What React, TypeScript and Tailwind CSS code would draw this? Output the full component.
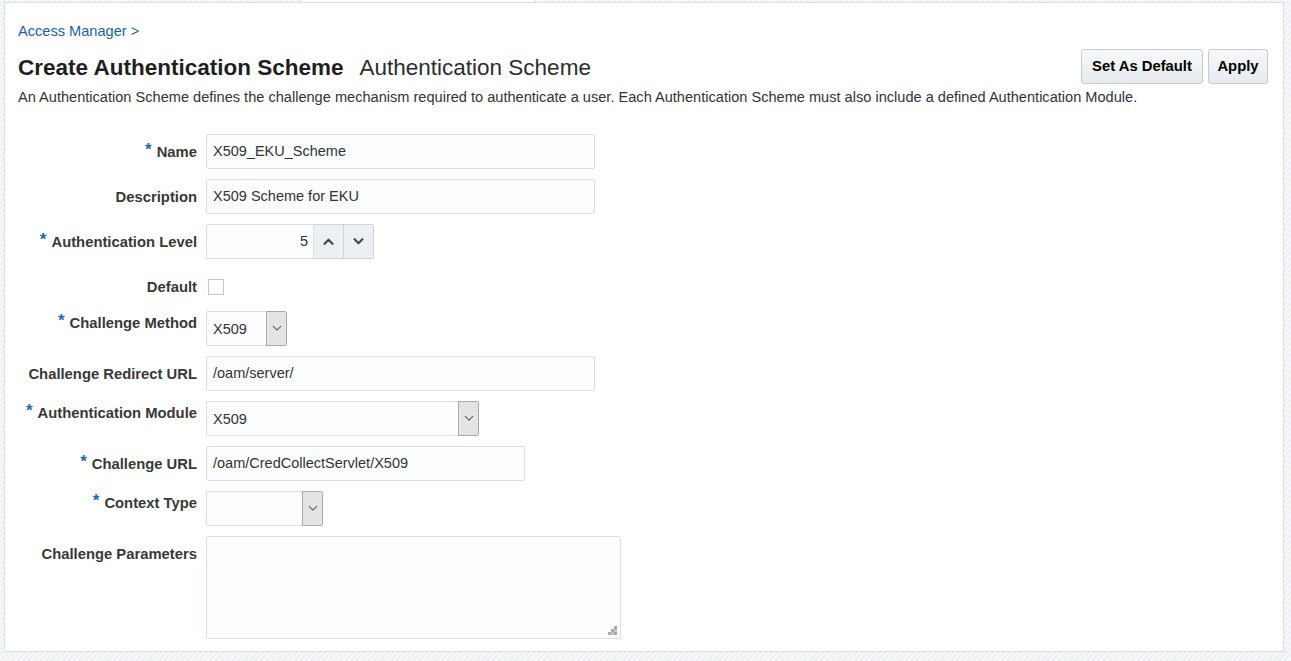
import React from "react";

type Row = {
  label: string;
  required?: boolean;
  kind: "text" | "spin" | "check" | "select" | "area";
  value?: string;
  width?: string;
};

const rows: Row[] = [
  { label: "Name", required: true, kind: "text", value: "X509_EKU_Scheme", width: "w-[389px]" },
  { label: "Description", kind: "text", value: "X509 Scheme for EKU", width: "w-[389px]" },
  { label: "Authentication Level", required: true, kind: "spin", value: "5" },
  { label: "Default", kind: "check" },
  { label: "Challenge Method", required: true, kind: "select", value: "X509", width: "w-[81px]" },
  { label: "Challenge Redirect URL", kind: "text", value: "/oam/server/", width: "w-[389px]" },
  { label: "Authentication Module", required: true, kind: "select", value: "X509", width: "w-[273px]" },
  { label: "Challenge URL", required: true, kind: "text", value: "/oam/CredCollectServlet/X509", width: "w-[319px]" },
  { label: "Context Type", required: true, kind: "select", value: "", width: "w-[117px]" },
  { label: "Challenge Parameters", kind: "area" },
];

const Chevron = ({ up, thin }: { up?: boolean; thin?: boolean }) => (
  <svg width={thin ? 10 : 11} height={thin ? 7 : 7} viewBox="0 0 12 8" fill="none">
    <path
      d={up ? "M1.5 6.5 L6 2 L10.5 6.5" : "M1.5 1.5 L6 6 L10.5 1.5"}
      stroke={thin ? "#5f5f5f" : "#4a4a4a"}
      strokeWidth={thin ? 1.3 : 2.6}
      strokeLinecap="round"
      strokeLinejoin="round"
    />
  </svg>
);

const Label = ({ row }: { row: Row }) => {
  const top = row.kind === "select" ? "pt-[4px]" : "pt-[10px]";
  return (
    <div className={`flex justify-end ${top} text-[14.8px] leading-[17px] font-bold text-[#383838] whitespace-nowrap`}>
      {row.required && (
        <span className="relative -top-[3px] mr-[5px] text-[17px] leading-[17px] text-[#1a68b5]">*</span>
      )}
      <span>{row.label}</span>
    </div>
  );
};

const Field = ({ row }: { row: Row }) => {
  const box = "border border-[#d9e0e5] bg-[#fcfdfe] rounded-[2px]";
  if (row.kind === "text") {
    return (
      <div className={`${row.width} h-[35px] ${box} flex items-center pl-[6px] text-[14.5px] text-[#333]`}>
        {row.value}
      </div>
    );
  }
  if (row.kind === "spin") {
    return (
      <div className="flex h-[35px]">
        <div className={`w-[108px] ${box} rounded-r-none flex items-center justify-end pr-[5px] text-[14.5px] text-[#333]`}>
          {row.value}
        </div>
        <div className="w-[30px] border border-l-0 border-[#cdd4d9] bg-[#edf0f2] flex items-center justify-center">
          <Chevron up />
        </div>
        <div className="w-[30px] border border-l-0 border-[#cdd4d9] bg-[#edf0f2] rounded-r-[2px] flex items-center justify-center">
          <Chevron />
        </div>
      </div>
    );
  }
  if (row.kind === "check") {
    return (
      <div className="h-[32px] pt-[10px] pl-[2px]">
        <div className="w-[16px] h-[16px] border border-[#c8c8c8] bg-white" />
      </div>
    );
  }
  if (row.kind === "select") {
    return (
      <div className={`${row.width} h-[35px] flex`}>
        <div className={`flex-1 ${box} rounded-r-none border-r-0 flex items-center pl-[6px] pt-[2px] text-[14.5px] text-[#333]`}>
          {row.value}
        </div>
        <div className="w-[21px] border border-[#a9a9a9] bg-[#e4e4e4] rounded-r-[2px] flex items-center justify-center">
          <Chevron thin />
        </div>
      </div>
    );
  }
  return (
    <div className={`relative w-[415px] h-[103px] ${box}`}>
      <svg className="absolute right-[3px] bottom-[3px]" width="9" height="9" viewBox="0 0 9 9">
        <rect x="6" y="0" width="3" height="3" fill="#a9a9a9" />
        <rect x="3" y="3" width="3" height="3" fill="#a9a9a9" />
        <rect x="6" y="3" width="3" height="3" fill="#c2c2c2" />
        <rect x="0" y="6" width="3" height="3" fill="#a9a9a9" />
        <rect x="3" y="6" width="3" height="3" fill="#c2c2c2" />
        <rect x="6" y="6" width="3" height="3" fill="#a9a9a9" />
      </svg>
    </div>
  );
};

const Button = ({ text, w }: { text: string; w: string }) => (
  <button
    className={`${w} h-[35px] rounded-[3px] border border-[#c3ccd3] bg-gradient-to-b from-[#f7f8f9] to-[#e7ebee] text-[14.8px] font-bold text-black`}
  >
    {text}
  </button>
);

export default function App() {
  return (
    <div
      className="w-full h-[661px] flex flex-col pl-[4px] pr-[7px] pb-[9px] bg-[repeating-linear-gradient(-45deg,#eef1f3_0px,#eef1f3_2px,#f7f8f9_2px,#f7f8f9_4px)]"
      style={{ fontFamily: '"Liberation Sans", Arial, sans-serif' }}
    >
      {/* tab strip */}
      <div className="h-[2px] flex">
        <div className="w-[296px]" />
        <div className="w-[236px] bg-white border-x border-[#d3dce3]" />
      </div>

      <div className="flex-1 border border-[#d6dfe6] bg-white pl-[13px] pr-[15px] pt-[20px]">
        <a className="block text-[14.6px] leading-[17px] text-[#1c5fa6]">Access Manager &gt;</a>

        <div className="mt-[9px] h-[35px] flex items-center justify-between">
          <div className="flex items-baseline gap-[16px] pt-[2px]">
            <h1 className="text-[22.5px] font-bold text-[#1f1f1f]">Create Authentication Scheme</h1>
            <span className="text-[22.5px] text-[#2d2d2d]">Authentication Scheme</span>
          </div>
          <div className="flex gap-[5px]">
            <Button text="Set As Default" w="w-[122px]" />
            <Button text="Apply" w="w-[60px]" />
          </div>
        </div>

        <p className="mt-[5px] text-[14.58px] leading-[17px] text-[#333]">
          An Authentication Scheme defines the challenge mechanism required to authenticate a user. Each Authentication
          Scheme must also include a defined Authentication Module.
        </p>

        <div className="mt-[28px] grid grid-cols-[179px_1fr] gap-x-[9px] gap-y-[10px] items-start">
          {rows.map((row) => (
            <React.Fragment key={row.label}>
              <Label row={row} />
              <Field row={row} />
            </React.Fragment>
          ))}
        </div>
      </div>
    </div>
  );
}
